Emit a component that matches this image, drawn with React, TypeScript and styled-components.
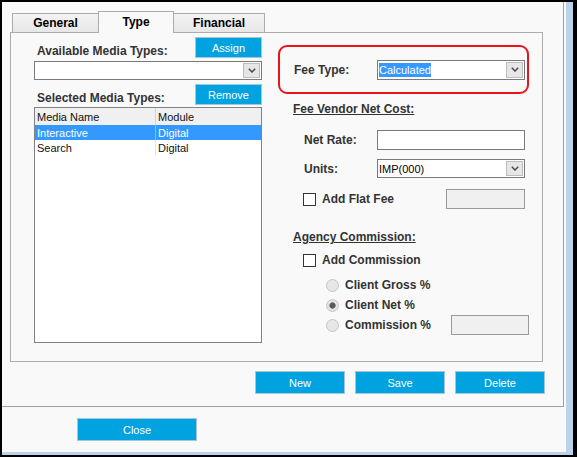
import styled, {createGlobalStyle} from "styled-components";

const GlobalStyle = createGlobalStyle`
  html, body {
    margin: 0;
    padding: 0;
    background: #000;
  }
  body {
    font-family: "Liberation Sans", Arial, sans-serif;
  }
`;

const Screen = styled.div`
  width: 577px;
  height: 457px;
  box-sizing: border-box;
  padding: 2px 4px 2px 2px;
  background: #000;
`;

const Window = styled.div`
  height: 100%;
  box-sizing: border-box;
  background: #f9f9f9;
  border-right: 7px solid #bad2eb;
  border-bottom: 3px solid #bad2eb;
`;

const MainPanel = styled.div`
  width: 562px;
  height: 405px;
  box-sizing: border-box;
  border-right: 1px solid #a0a0a0;
  border-bottom: 1px solid #a0a0a0;
  padding: 9px 0 0 8px;
`;

const TabStrip = styled.div`
  display: flex;
  align-items: flex-end;
  height: 21px;
  margin-left: 2px;
  position: relative;
  z-index: 1;
`;

const Tab = styled.div<{$active?: boolean; $width: number}>`
  width: ${p => p.$width}px;
  height: ${p => (p.$active ? 22 : 19)}px;
  margin-bottom: ${p => (p.$active ? -1 : 0)}px;
  margin-left: -1px;
  &:first-child {
    margin-left: 0;
  }
  box-sizing: border-box;
  border: 1px solid #acacac;
  border-bottom: none;
  background: ${p => (p.$active ? "#f9f9f9" : "linear-gradient(#f3f3f3, #e7e7e7)")};
  display: flex;
  align-items: center;
  justify-content: center;
  padding-bottom: ${p => (p.$active ? 2 : 0)}px;
  font-size: 12px;
  font-weight: bold;
  color: #000;
  position: relative;
  z-index: ${p => (p.$active ? 2 : 1)};
`;

const TabBody = styled.div`
  width: 533px;
  height: 330px;
  box-sizing: border-box;
  border: 1px solid #acacac;
  background: #f9f9f9;
  padding: 4px 0 0 23px;
  display: grid;
  grid-template-columns: 228px 251px;
  column-gap: 16px;
  align-items: start;
`;

const Column = styled.div`
  display: flex;
  flex-direction: column;
`;

const HeadRow = styled.div<{$top: number}>`
  display: flex;
  justify-content: space-between;
  align-items: flex-end;
  padding-left: 3px;
  margin-top: ${p => p.$top}px;
`;

const FieldLabel = styled.span<{$width?: number}>`
  ${p => (p.$width ? `width: ${p.$width}px; flex: none;` : "")}
  font-size: 12px;
  font-weight: bold;
  line-height: 14px;
  color: #333;
  white-space: nowrap;
`;

const BlueButton = styled.button<{$width: number; $height: number}>`
  width: ${p => p.$width}px;
  height: ${p => p.$height}px;
  box-sizing: border-box;
  border: 1px solid #a3c6d9;
  background: #00a3df;
  color: #fff;
  font-family: "Liberation Sans", Arial, sans-serif;
  font-size: 11px;
  padding: 0;
  cursor: pointer;
`;

const Dropdown = styled.div<{$width: number; $height: number; $top?: number}>`
  width: ${p => p.$width}px;
  height: ${p => p.$height}px;
  margin-top: ${p => p.$top ?? 0}px;
  box-sizing: border-box;
  border: 1px solid #7a7a7a;
  background: #fff;
  display: flex;
  flex: none;
`;

const DropText = styled.div`
  flex: 1;
  display: flex;
  align-items: center;
  padding-left: 1px;
  font-size: 11px;
  color: #000;
`;

const Highlight = styled.span`
  background: #3399ff;
  color: #fff;
  line-height: 14px;
`;

const DropArrow = styled.div`
  width: 17px;
  margin: 1px;
  box-sizing: border-box;
  border: 1px solid #bdbdbd;
  background: #e6e6e6;
  display: flex;
  align-items: center;
  justify-content: center;
`;

const ListBox = styled.div`
  width: 228px;
  height: 236px;
  margin-top: 2px;
  box-sizing: border-box;
  border: 1px solid #828282;
  background: #fff;
`;

const ListRow = styled.div<{$header?: boolean; $selected?: boolean}>`
  display: grid;
  grid-template-columns: 121px 1fr;
  height: ${p => (p.$header ? 17 : 15)}px;
  background: ${p => (p.$header ? "#f0f0f0" : p.$selected ? "#3399ff" : "#fff")};
  color: ${p => (p.$selected ? "#fff" : "#111")};
  font-size: 11px;
`;

const Cell = styled.div<{$divider?: string}>`
  display: flex;
  align-items: center;
  padding-left: 2px;
  white-space: nowrap;
  border-right: ${p => (p.$divider ? `1px solid ${p.$divider}` : "none")};
`;

const FeeBox = styled.div`
  margin-top: 8px;
  height: 49px;
  box-sizing: border-box;
  border: 2px solid #e8141c;
  border-radius: 9px;
  display: flex;
  align-items: center;
  padding: 0 1px 0 14px;
`;

const SectionTitle = styled.div<{$top: number}>`
  margin-top: ${p => p.$top}px;
  padding-left: 15px;
  font-size: 12px;
  font-weight: bold;
  line-height: 14px;
  color: #333;
  text-decoration: underline;
`;

const FormRow = styled.div<{$top: number; $indent: number; $height: number; $right?: number}>`
  display: flex;
  align-items: center;
  margin-top: ${p => p.$top}px;
  height: ${p => p.$height}px;
  padding-left: ${p => p.$indent}px;
  padding-right: ${p => p.$right ?? 0}px;
`;

const TextBox = styled.div<{$width: number; $disabled?: boolean}>`
  width: ${p => p.$width}px;
  height: 20px;
  box-sizing: border-box;
  flex: none;
  border: 1px solid ${p => (p.$disabled ? "#9a9a9a" : "#7a7a7a")};
  background: ${p => (p.$disabled ? "#f0f0f0" : "#fff")};
  margin-left: auto;
`;

const CheckBox = styled.span`
  width: 13px;
  height: 13px;
  box-sizing: border-box;
  border: 1px solid #333;
  background: #fff;
  margin-right: 6px;
  flex: none;
`;

const Radio = styled.span<{$checked?: boolean}>`
  width: 13px;
  height: 13px;
  box-sizing: border-box;
  border-radius: 50%;
  border: 1px solid #c6c6c6;
  background: ${p =>
    p.$checked
      ? "radial-gradient(circle, #5c5c5c 0 2.5px, #8a8a8a 3px, #e4e4e4 3.5px)"
      : "#e6e6e6"};
  margin-right: 6px;
  flex: none;
`;

const ButtonBar = styled.div`
  display: flex;
  justify-content: flex-end;
  gap: 10px;
  margin-top: 9px;
  padding-right: 18px;
`;

const Footer = styled.div`
  padding: 11px 0 0 75px;
`;

const Chevron = () => (
  <svg width="8" height="5" viewBox="0 0 8 5">
    <polyline points="0.8,0.8 4,4 7.2,0.8" fill="none" stroke="#4a4a4a" strokeWidth="1.5" />
  </svg>
);

const mediaRows: [string, string][] = [
  ["Interactive", "Digital"],
  ["Search", "Digital"],
];

export default function App() {
  return (
    <Screen>
      <GlobalStyle />
      <Window>
        <MainPanel>
          <TabStrip>
            <Tab $width={87}>General</Tab>
            <Tab $width={76} $active>Type</Tab>
            <Tab $width={92}>Financial</Tab>
          </TabStrip>
          <TabBody>
            <Column>
              <HeadRow $top={0}>
                <FieldLabel>Available Media Types:</FieldLabel>
                <BlueButton $width={67} $height={21}>Assign</BlueButton>
              </HeadRow>
              <Dropdown $width={228} $height={19} $top={3}>
                <DropText />
                <DropArrow><Chevron /></DropArrow>
              </Dropdown>
              <HeadRow $top={4}>
                <FieldLabel>Selected Media Types:</FieldLabel>
                <BlueButton $width={67} $height={21}>Remove</BlueButton>
              </HeadRow>
              <ListBox>
                <ListRow $header>
                  <Cell $divider="#d4d4d4">Media Name</Cell>
                  <Cell>Module</Cell>
                </ListRow>
                {mediaRows.map((row, i) => (
                  <ListRow key={row[0]} $selected={i === 0}>
                    <Cell $divider={i === 0 ? "#7fbfff" : "#e2e2e2"}>{row[0]}</Cell>
                    <Cell>{row[1]}</Cell>
                  </ListRow>
                ))}
              </ListBox>
            </Column>

            <Column>
              <FeeBox>
                <FieldLabel $width={83}>Fee Type:</FieldLabel>
                <Dropdown $width={148} $height={20}>
                  <DropText><Highlight>Calculated</Highlight></DropText>
                  <DropArrow><Chevron /></DropArrow>
                </Dropdown>
              </FeeBox>

              <SectionTitle $top={8}>Fee Vendor Net Cost:</SectionTitle>
              <FormRow $top={14} $indent={26} $height={20} $right={4}>
                <FieldLabel $width={73}>Net Rate:</FieldLabel>
                <TextBox $width={148} />
              </FormRow>
              <FormRow $top={9} $indent={26} $height={19} $right={4}>
                <FieldLabel $width={73}>Units:</FieldLabel>
                <Dropdown $width={148} $height={19}>
                  <DropText>IMP(000)</DropText>
                  <DropArrow><Chevron /></DropArrow>
                </Dropdown>
              </FormRow>
              <FormRow $top={11} $indent={25} $height={20} $right={4}>
                <CheckBox />
                <FieldLabel>Add Flat Fee</FieldLabel>
                <TextBox $width={79} $disabled />
              </FormRow>

              <SectionTitle $top={21}>Agency Commission:</SectionTitle>
              <FormRow $top={9} $indent={25} $height={14}>
                <CheckBox />
                <FieldLabel>Add Commission</FieldLabel>
              </FormRow>
              <FormRow $top={8} $indent={48} $height={20}>
                <Radio />
                <FieldLabel>Client Gross %</FieldLabel>
              </FormRow>
              <FormRow $top={0} $indent={48} $height={20}>
                <Radio $checked />
                <FieldLabel>Client Net %</FieldLabel>
              </FormRow>
              <FormRow $top={0} $indent={48} $height={20}>
                <Radio />
                <FieldLabel>Commission %</FieldLabel>
                <TextBox $width={78} $disabled />
              </FormRow>
            </Column>
          </TabBody>

          <ButtonBar>
            <BlueButton $width={90} $height={23}>New</BlueButton>
            <BlueButton $width={90} $height={23}>Save</BlueButton>
            <BlueButton $width={90} $height={23}>Delete</BlueButton>
          </ButtonBar>
        </MainPanel>
        <Footer>
          <BlueButton $width={120} $height={23}>Close</BlueButton>
        </Footer>
      </Window>
    </Screen>
  );
}
